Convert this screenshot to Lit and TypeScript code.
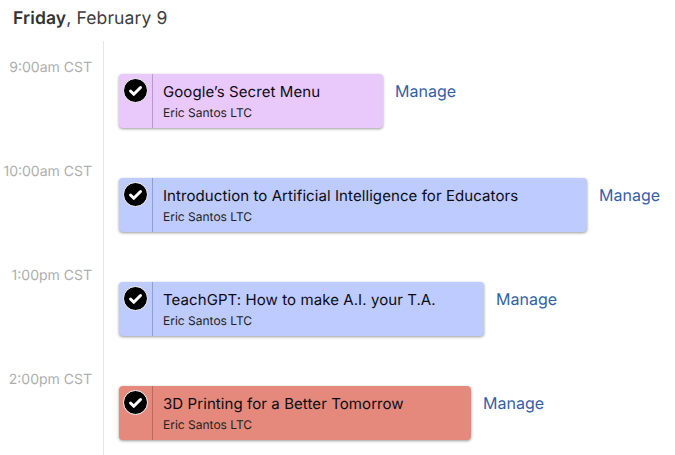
import { LitElement, html, css } from "lit";
import { customElement } from "lit/decorators.js";

const EVENTS = [
  { time: "9:00am CST", title: "Google’s Secret Menu", color: "#e9c8fb", w: 264, div: "#b79ac8" },
  { time: "10:00am CST", title: "Introduction to Artificial Intelligence for Educators", color: "#bdcbff", w: 468, div: "#8f9fd0" },
  { time: "1:00pm CST", title: "TeachGPT: How to make A.I. your T.A.", color: "#bdcbff", w: 365, div: "#8f9fd0" },
  { time: "2:00pm CST", title: "3D Printing for a Better Tomorrow", color: "#e4897c", w: 352, div: "#b9695e" },
];

@customElement("app-root")
export class AppRoot extends LitElement {
  static styles = css`
    :host {
      display: block;
      width: 675px;
      height: 455px;
      overflow: hidden;
      background: #fff;
      font-family: Inter, "Liberation Sans", sans-serif;
      color: #000;
      text-rendering: geometricPrecision;
    }
    .date {
      height: 41px;
      box-sizing: border-box;
      padding: 8px 0 0 13px;
      font-size: 17.5px;
      line-height: 22px;
      color: #3c3c3c;
      letter-spacing: 0.12px;
    }
    .date b { font-weight: 600; color: #333; }
    .row { display: flex; height: 104px; }
    .time {
      width: 104px;
      flex: none;
      box-sizing: border-box;
      border-right: 1px solid #e6e6e6;
      padding: 18px 11px 0 0;
      text-align: right;
      font-size: 14px;
      line-height: 18px;
      color: #adadad;
      white-space: nowrap;
    }
    .lane {
      display: flex;
      align-items: flex-start;
      padding: 33px 0 0 15px;
      gap: 12px;
    }
    .card {
      height: 54px;
      box-sizing: border-box;
      display: flex;
      flex: none;
      border-radius: 4px;
      box-shadow: 0 1px 3px rgba(0, 0, 0, 0.4);
    }
    .check {
      width: 34px;
      flex: none;
      box-sizing: border-box;
      border-right: 1px solid;
      padding: 4px 0 0 4px;
    }
    .check svg { display: block; width: 25px; height: 25px; }
    .body { padding: 8px 0 0 10px; white-space: nowrap; }
    .title { font-size: 15px; line-height: 20px; font-weight: 400; color: #0c0c14; letter-spacing: 0.08px; }
    .host { font-size: 12px; line-height: 16px; margin-top: 3px; color: #222; }
    .manage {
      padding-top: 6px;
      font-size: 16px;
      line-height: 22px;
      color: #345ea8;
      text-decoration: none;
    }
  `;

  render() {
    return html`
      <div class="date"><b>Friday</b>, February 9</div>
      ${EVENTS.map(
        (e) => html`
          <div class="row">
            <div class="time">${e.time}</div>
            <div class="lane">
              <div class="card" style="width:${e.w}px;background:${e.color}">
                <div class="check" style="border-color:${e.div}">
                  <svg viewBox="0 0 25 25">
                    <circle cx="12.5" cy="12.5" r="12" fill="#000" stroke="#fff" stroke-width="1"></circle>
                    <path d="M7.5 13l3.3 3.3L17.5 9.5" fill="none" stroke="#fff" stroke-width="3" stroke-linecap="round" stroke-linejoin="round"></path>
                  </svg>
                </div>
                <div class="body">
                  <div class="title">${e.title}</div>
                  <div class="host">Eric Santos LTC</div>
                </div>
              </div>
              <a class="manage" href="#">Manage</a>
            </div>
          </div>
        `
      )}
    `;
  }
}
